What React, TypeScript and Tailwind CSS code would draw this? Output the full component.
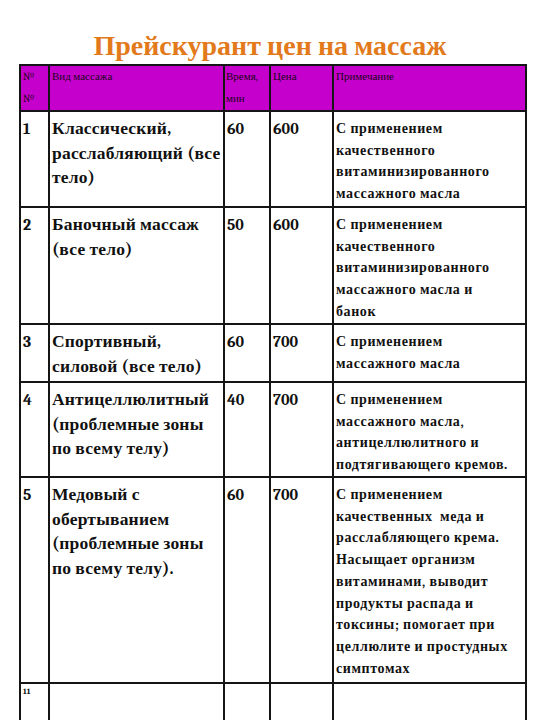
const ROWS = [
  {
    n: "1",
    name: ["Классический,", "расслабляющий (все", "тело)"],
    time: "60",
    price: "600",
    note: ["С применением", "качественного", "витаминизированного", "массажного масла"],
    h: "h-[96px]",
  },
  {
    n: "2",
    name: ["Баночный массаж", "(все тело)"],
    time: "50",
    price: "600",
    note: ["С применением", "качественного", "витаминизированного", "массажного масла и", "банок"],
    h: "h-[117px]",
  },
  {
    n: "3",
    name: ["Спортивный,", "силовой (все тело)"],
    time: "60",
    price: "700",
    note: ["С применением", "массажного масла"],
    h: "h-[58px]",
  },
  {
    n: "4",
    name: ["Антицеллюлитный", "(проблемные зоны", "по всему телу)"],
    time: "40",
    price: "700",
    note: ["С применением", "массажного масла,", "антицеллюлитного и", "подтягивающего кремов."],
    h: "h-[95px]",
  },
  {
    n: "5",
    name: ["Медовый с", "обертыванием", "(проблемные зоны", "по всему телу)."],
    time: "60",
    price: "700",
    note: [
      "С применением",
      "качественных  меда и",
      "расслабляющего крема.",
      "Насыщает организм",
      "витаминами, выводит",
      "продукты распада и",
      "токсины; помогает при",
      "целлюлите и простудных",
      "симптомах",
    ],
    h: "h-[206px]",
  },
];

const cell = "border-2 border-[#151515] align-top";

function Lines({ lines }: { lines: string[] }) {
  return (
    <>
      {lines.map((l) => (
        <div key={l} className="whitespace-pre">
          {l}
        </div>
      ))}
    </>
  );
}

export default function App() {
  return (
    <div className="w-[540px] h-[720px] overflow-hidden bg-white font-serif [font-family:Liberation_Serif,DejaVu_Serif,serif]">
      <h1 className="pt-[30px] h-[64px] text-center text-[28px] leading-[32px] font-bold text-[#e27a1c]">
        Прейскурант цен на массаж
      </h1>
      <table className="ml-[19px] w-[508px] table-fixed border-collapse">
        <colgroup>
          <col className="w-[29px]" />
          <col className="w-[175px]" />
          <col className="w-[46px]" />
          <col className="w-[63px]" />
          <col />
        </colgroup>
        <thead>
          <tr className="h-[45px] bg-[#c600cc] text-[11px] leading-[22px] text-[#1a0020]">
            <th className={`${cell} text-left font-normal pl-[2px]`}>
              №<br />№
            </th>
            <th className={`${cell} text-left font-normal pl-[2px]`}>Вид массажа</th>
            <th className={`${cell} text-left font-normal pl-[1px]`}>
              Время,
              <br />
              мин
            </th>
            <th className={`${cell} text-left font-normal pl-[2px]`}>Цена</th>
            <th className={`${cell} text-left font-normal pl-[2px]`}>Примечание</th>
          </tr>
        </thead>
        <tbody>
          {ROWS.map((r) => (
            <tr key={r.n} className={`${r.h} font-bold text-[#111]`}>
              <td className={`${cell} pl-[2px] pt-[5px] text-[16px] leading-[24px]`}>{r.n}</td>
              <td className={`${cell} pl-[2px] pt-[4px] text-[17.5px] leading-[24.5px] tracking-[0.2px]`}>
                <Lines lines={r.name} />
              </td>
              <td className={`${cell} pl-[2px] pt-[5px] text-[16px] leading-[24px]`}>{r.time}</td>
              <td className={`${cell} pl-[2px] pt-[5px] text-[16px] leading-[24px]`}>{r.price}</td>
              <td className={`${cell} pl-[2px] pt-[6px] text-[14px] leading-[21.7px] tracking-[0.6px]`}>
                <Lines lines={r.note} />
              </td>
            </tr>
          ))}
          <tr className="h-[60px]">
            <td className={`${cell} pl-[2px] pt-[3px] text-[8px] leading-[10px] font-bold`}>11</td>
            <td className={cell} />
            <td className={cell} />
            <td className={cell} />
            <td className={cell} />
          </tr>
        </tbody>
      </table>
    </div>
  );
}
